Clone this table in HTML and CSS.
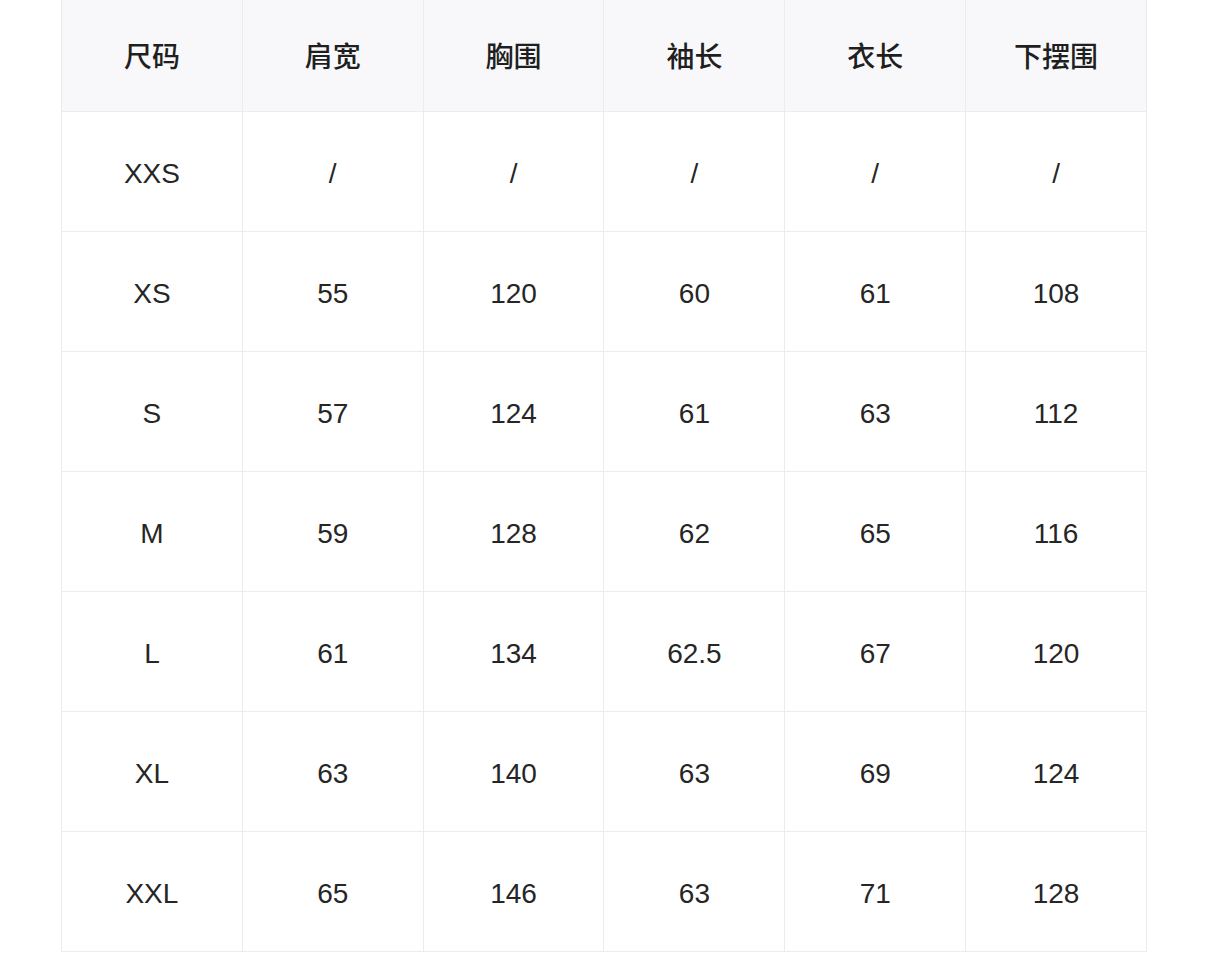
FILE: index.html
```html
<!DOCTYPE html>
<html lang="zh">
<head>
<meta charset="utf-8">
<link rel="stylesheet" href="styles.css">
</head>
<body>
<div class="wrap">
<table class="size-table">
<thead>
<tr><th>尺码</th><th>肩宽</th><th>胸围</th><th>袖长</th><th>衣长</th><th>下摆围</th></tr>
</thead>
<tbody>
<tr><td>XXS</td><td>/</td><td>/</td><td>/</td><td>/</td><td>/</td></tr>
<tr><td>XS</td><td>55</td><td>120</td><td>60</td><td>61</td><td>108</td></tr>
<tr><td>S</td><td>57</td><td>124</td><td>61</td><td>63</td><td>112</td></tr>
<tr><td>M</td><td>59</td><td>128</td><td>62</td><td>65</td><td>116</td></tr>
<tr><td>L</td><td>61</td><td>134</td><td>62.5</td><td>67</td><td>120</td></tr>
<tr><td>XL</td><td>63</td><td>140</td><td>63</td><td>69</td><td>124</td></tr>
<tr><td>XXL</td><td>65</td><td>146</td><td>63</td><td>71</td><td>128</td></tr>
</tbody>
</table>
</div>
</body>
</html>
```

FILE: styles.css
```css
html, body {
  margin: 0;
  padding: 0;
  background: #ffffff;
}
.wrap {
  padding-left: 61px;
  width: 1086px;
}
.size-table {
  width: 1086px;
  border-collapse: collapse;
  table-layout: fixed;
  font-family: "Liberation Sans", "Noto Sans CJK SC", sans-serif;
  font-size: 28px;
  color: #262626;
}
.size-table th,
.size-table td {
  border: 1px solid #ebecef;
  border-top: none;
  text-align: center;
  vertical-align: middle;
  padding: 0;
}
.size-table th {
  height: 109px;
  padding-bottom: 2px;
  background: #f8f8fa;
  font-family: "Noto Sans CJK SC", sans-serif;
  font-weight: 500;
  font-size: 28px;
  color: #1f1f1f;
}
.size-table td {
  height: 115px;
  padding-top: 4px;
}
```
